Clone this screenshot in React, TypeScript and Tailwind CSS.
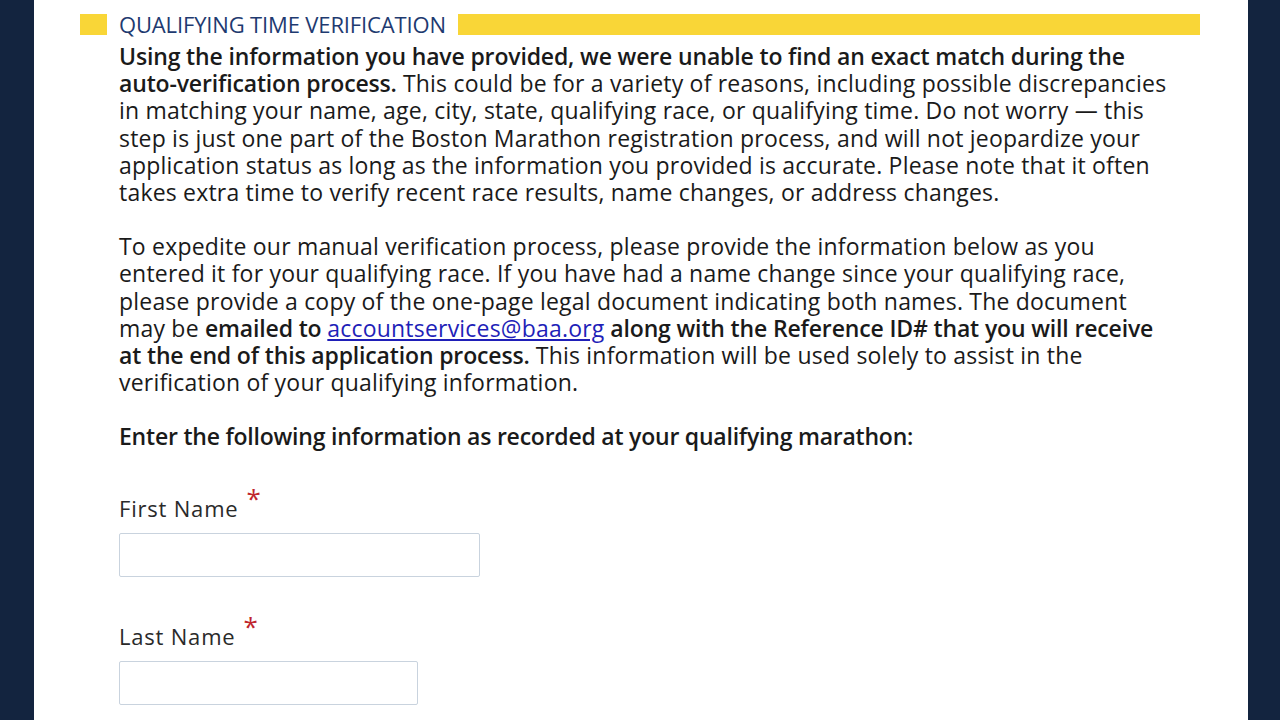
import React from "react";

const font = { fontFamily: '"Open Sans", "Liberation Sans", sans-serif' };

export default function App() {
  return (
    <div className="w-[1280px] h-[720px] bg-[#13243f] flex overflow-hidden" style={font}>
      <div className="ml-[34px] w-[1214px] h-full bg-white pt-[13px] pl-[46px] pr-[48px]">
        <div className="flex items-center h-[22px]">
          <div className="w-[27px] h-[21px] bg-[#f9d637]" />
          <div className="ml-[12px] text-[22px] leading-[22px] text-[#1e3a70] whitespace-nowrap tracking-[-0.15px]">
            QUALIFYING TIME VERIFICATION
          </div>
          <div className="ml-[12px] flex-1 h-[21px] bg-[#f9d637]" />
        </div>
        <div className="pl-[39px] text-[23px] leading-[27.2px] text-[#1a1a1a] whitespace-nowrap mt-[8px] tracking-[0.2px]">
          <p>
            <b className="font-semibold tracking-[-0.15px]">Using the information you have provided, we were unable to find an exact match during the</b>
            <br />
            <b className="font-semibold tracking-[-0.15px]">auto-verification process.</b> This could be for a variety of reasons, including possible discrepancies
            <br />
            in matching your name, age, city, state, qualifying race, or qualifying time. Do not worry — this
            <br />
            step is just one part of the Boston Marathon registration process, and will not jeopardize your
            <br />
            application status as long as the information you provided is accurate. Please note that it often
            <br />
            takes extra time to verify recent race results, name changes, or address changes.
          </p>
          <p className="mt-[27px]">
            To expedite our manual verification process, please provide the information below as you
            <br />
            entered it for your qualifying race. If you have had a name change since your qualifying race,
            <br />
            please provide a copy of the one-page legal document indicating both names. The document
            <br />
            may be <b className="font-semibold tracking-[-0.15px]">emailed to </b>
            <a className="text-[#1f1fb8] underline underline-offset-2" href="#">accountservices@baa.org</a>
            <b className="font-semibold tracking-[-0.15px]"> along with the Reference ID# that you will receive</b>
            <br />
            <b className="font-semibold tracking-[-0.15px]">at the end of this application process.</b> This information will be used solely to assist in the
            <br />
            verification of your qualifying information.
          </p>
          <p className="mt-[27px] font-semibold tracking-[-0.22px]">
            Enter the following information as recorded at your qualifying marathon:
          </p>
          <div className="mt-[44px]">
            <div className="flex items-start text-[22px] leading-[26px] text-[#2a2a2a] tracking-[0.8px]">
              <span>First Name</span>
              <span className="ml-[8px] -mt-[10px] text-[#c0262d] text-[26px]">*</span>
            </div>
            <div className="mt-[12px] w-[361px] h-[44px] border border-[#c9d3de] rounded-[2px]" />
          </div>
          <div className="mt-[46px]">
            <div className="flex items-start text-[22px] leading-[26px] text-[#2a2a2a] tracking-[0.8px]">
              <span>Last Name</span>
              <span className="ml-[8px] -mt-[10px] text-[#c0262d] text-[26px]">*</span>
            </div>
            <div className="mt-[12px] w-[299px] h-[44px] border border-[#c9d3de] rounded-[2px]" />
          </div>
        </div>
      </div>
    </div>
  );
}
